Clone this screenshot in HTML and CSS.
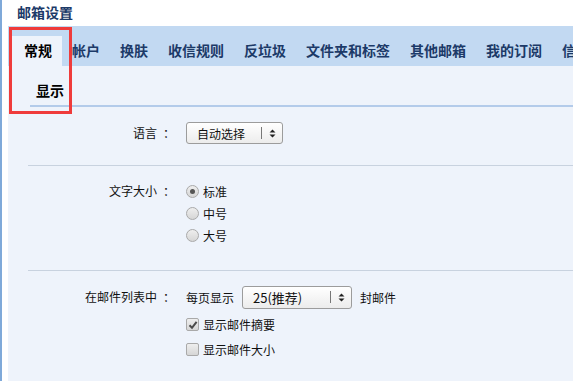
FILE: index.html
```html
<!DOCTYPE html>
<html lang="zh-CN">
  <head>
    <meta charset="UTF-8" />
    <meta name="viewport" content="width=device-width, initial-scale=1.0" />
    <title>邮箱设置</title>
    <link rel="stylesheet" href="styles.css">
  </head>
  <body>
    <div class="page">
      <h1 class="title">邮箱设置</h1>
      <div class="panel">
        <ul class="tabs">
          <li class="tab active">常规</li>
          <li class="tab">帐户</li>
          <li class="tab">换肤</li>
          <li class="tab">收信规则</li>
          <li class="tab">反垃圾</li>
          <li class="tab">文件夹和标签</li>
          <li class="tab">其他邮箱</li>
          <li class="tab">我的订阅</li>
          <li class="tab">信纸</li>
        </ul>

        <div class="subnav"><span class="subtab">显示</span></div>

        <div class="row first">
          <div class="label">语言<span class="colon">：</span></div>
          <div class="field">
            <div class="line">
              <div class="select select-lang">
                <span class="select-text">自动选择</span>
                <span class="select-arrow">
                  <svg width="7" height="9" viewBox="0 0 7 9"><path d="M3.5 0.5L6.5 3.5H0.5Z M3.5 8.5L0.5 5.5H6.5Z" fill="#222"/></svg>
                </span>
              </div>
            </div>
          </div>
        </div>

        <div class="row radios">
          <div class="label">文字大小<span class="colon">：</span></div>
          <div class="field">
            <label class="line option"><span class="radio checked"></span>标准</label>
            <label class="line option"><span class="radio"></span>中号</label>
            <label class="line option"><span class="radio"></span>大号</label>
          </div>
        </div>

        <div class="row last">
          <div class="label">在邮件列表中<span class="colon">：</span></div>
          <div class="field">
            <div class="line">
              每页显示
              <div class="select select-count">
                <span class="select-text">25(推荐)</span>
                <span class="select-arrow">
                  <svg width="7" height="9" viewBox="0 0 7 9"><path d="M3.5 0.5L6.5 3.5H0.5Z M3.5 8.5L0.5 5.5H6.5Z" fill="#222"/></svg>
                </span>
              </div>
              封邮件
            </div>
            <label class="line check-line option"><span class="checkbox checked">
              <svg width="10" height="10" viewBox="0 0 10 10"><path d="M1.5 5.2L4 7.8L8.6 1.8" fill="none" stroke="#4a4a4a" stroke-width="2"/></svg>
            </span>显示邮件摘要</label>
            <label class="line check-line option"><span class="checkbox"></span>显示邮件大小</label>
          </div>
        </div>
      </div>

      <div class="highlight"></div>
    </div>
  </body>
</html>
```

FILE: styles.css
```css
body {
  margin: 0;
  background-color: #fff;
  font-family: "Noto Sans CJK SC", "Microsoft YaHei", sans-serif;
  font-size: 12px;
  color: #111;
  overflow: hidden;
}

.page {
  position: relative;
  height: 381px;
  border-left: 2px solid #7fa9d9;
  padding-left: 6px;
}

.title {
  margin: 0 0 0 -6px;
  padding-left: 15px;
  height: 26px;
  line-height: 24px;
  font-size: 14px;
  font-weight: bold;
  color: #1c3a68;
}

.panel {
  background-color: #eef3fb;
  height: 355px;
  overflow: hidden;
}

.tabs {
  display: flex;
  align-items: flex-end;
  margin: 0;
  padding: 0 0 0 4px;
  list-style: none;
  height: 40px;
  background-color: #c2d9f2;
  white-space: nowrap;
  overflow: hidden;
}

.tab {
  flex-shrink: 0;
  padding: 0 10px;
  height: 30px;
  line-height: 28px;
  font-size: 14px;
  font-weight: bold;
  color: #1c3a68;
}

.tab.active {
  padding-left: 12px;
  background-color: #eef3fb;
  color: #000;
}

.subnav {
  margin-left: 22px;
  padding: 14px 0 5px 6px;
  border-bottom: 2px solid #b3cbea;
}

.subtab {
  line-height: 20px;
  font-size: 14px;
  font-weight: bold;
  color: #000;
}

.row {
  display: grid;
  grid-template-columns: 142px 1fr;
  column-gap: 16px;
  margin-left: 20px;
  padding: 15px 0 22px;
  border-bottom: 1px solid #c8d2df;
}

.row.first {
  padding-bottom: 21px;
}

.row.radios {
  padding-top: 14px;
  padding-bottom: 24px;
}

.row.last {
  border-bottom: none;
}

.label {
  text-align: right;
  line-height: 22px;
}

/* push the full-width colon to the middle of its cell */
.colon {
  padding-left: 6px;
  margin-right: -5px;
}

.line {
  display: flex;
  align-items: center;
  height: 22px;
}

.option {
  cursor: pointer;
}

.check-line {
  height: 25px;
}

.check-line:first-of-type {
  margin-top: 4px;
}

.select {
  display: flex;
  align-items: center;
  box-sizing: border-box;
  height: 22px;
  border: 1px solid #9c9c9c;
  border-radius: 3px;
  background: linear-gradient(#ffffff, #ececec);
  font-size: 12px;
}

.select-lang {
  width: 97px;
}

.select-count {
  width: 110px;
  height: 23px;
  margin: 0 8px;
  font-size: 13px;
}

.select-text {
  flex: 1;
  padding-left: 10px;
}

.select-arrow {
  display: flex;
  align-items: center;
  justify-content: center;
  width: 20px;
  height: 12px;
  border-left: 1px solid #777;
}

.radio,
.checkbox {
  display: inline-flex;
  align-items: center;
  justify-content: center;
  box-sizing: border-box;
  width: 13px;
  height: 13px;
  margin-right: 4px;
  border: 1px solid #a9a9a9;
  background: linear-gradient(#eeeeee, #d6d6d6);
}

.radio {
  border-radius: 50%;
}

.radio.checked::after {
  content: "";
  width: 5px;
  height: 5px;
  border-radius: 50%;
  background-color: #555;
}

.checkbox {
  border-radius: 2px;
}

.highlight {
  position: absolute;
  left: 7px;
  top: 27px;
  width: 63px;
  height: 87px;
  box-sizing: border-box;
  border: 3px solid #ef3b3b;
}
```
